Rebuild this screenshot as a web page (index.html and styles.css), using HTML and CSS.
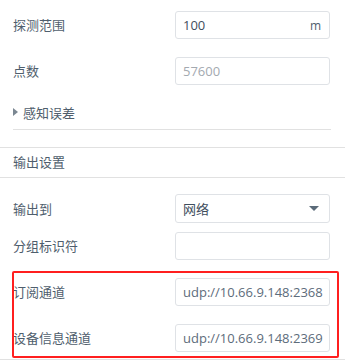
FILE: index.html
```html
<!DOCTYPE html>
<html lang="zh-CN">
<head>
  <meta charset="UTF-8">
  <meta name="viewport" content="width=device-width, initial-scale=1.0">
  <title>输出设置</title>
  <link rel="stylesheet" href="styles.css">
</head>
<body>
  <div class="panel">
    <div class="form top-form">
      <div class="row">
        <label>探测范围</label>
        <div class="field">
          <span class="value">100</span>
          <span class="unit">m</span>
        </div>
      </div>
      <div class="row">
        <label>点数</label>
        <div class="field">
          <span class="value muted">57600</span>
        </div>
      </div>
      <div class="collapse">
        <span class="caret"></span>
        <span>感知误差</span>
      </div>
    </div>

    <div class="section-title">输出设置</div>

    <div class="form">
      <div class="row tight">
        <label>输出到</label>
        <div class="field select">
          <span class="value">网络</span>
          <span class="arrow"></span>
        </div>
      </div>
      <div class="row">
        <label>分组标识符</label>
        <div class="field"></div>
      </div>
      <div class="highlight">
        <div class="row">
          <label>订阅通道</label>
          <div class="field">
            <span class="value soft">udp://10.66.9.148:2368</span>
          </div>
        </div>
        <div class="row last">
          <label>设备信息通道</label>
          <div class="field">
            <span class="value soft">udp://10.66.9.148:2369</span>
          </div>
        </div>
      </div>
    </div>
    <div class="panel-end"></div>
  </div>
</body>
</html>
```

FILE: styles.css
```css
* {
  margin: 0;
  padding: 0;
  box-sizing: border-box;
}

body {
  background: #ffffff;
  font-family: 'Open Sans', 'Noto Sans CJK SC', sans-serif;
  font-size: 13px;
  color: #4f5e6d;
}

.panel {
  width: 345px;
}

.form {
  padding: 16px 15px 0 13px;
}

.top-form {
  padding-top: 11px;
}

.row {
  display: flex;
  align-items: center;
  margin-bottom: 18px;
}

.row.tight {
  margin-bottom: 9px;
}

.row.last {
  margin-bottom: 0;
}

.row label {
  flex: 1;
  line-height: 20px;
}

.field {
  width: 155px;
  height: 28px;
  border: 1px solid #dfe2e6;
  border-radius: 3px;
  display: flex;
  align-items: center;
  justify-content: space-between;
  padding: 0 8px 0 7px;
  color: #3f4e5d;
  white-space: nowrap;
  overflow: hidden;
}

.value.muted {
  color: #a3a9b0;
}

.value.soft {
  color: #5d6c7b;
}

.unit {
  font-size: 12px;
  color: #4f5e6d;
}

.select {
  height: 29px;
}

.arrow {
  width: 0;
  height: 0;
  border-left: 5px solid transparent;
  border-right: 5px solid transparent;
  border-top: 5px solid #5b6b79;
  margin-right: 2px;
}

.collapse {
  display: flex;
  align-items: center;
  gap: 4px;
  margin-top: -1px;
  height: 20px;
  box-sizing: content-box;
  padding-bottom: 7px;
  border-bottom: 1px solid #e1e1e1;
  margin-right: -1px;
}

.caret {
  width: 0;
  height: 0;
  border-top: 4px solid transparent;
  border-bottom: 4px solid transparent;
  border-left: 5px solid #7b8792;
  margin-right: 1px;
}

.section-title {
  margin-top: 17px;
  height: 31px;
  line-height: 29px;
  padding-left: 13px;
  border-top: 1px solid #e1e1e1;
  border-bottom: 1px solid #e1e1e1;
}

.highlight {
  position: relative;
}

.highlight::after {
  content: '';
  position: absolute;
  top: -7px;
  bottom: -6px;
  left: -1px;
  right: -9px;
  border: 2px solid #ff1f1f;
  border-radius: 2px;
  pointer-events: none;
}

.panel-end {
  margin-top: 7px;
  border-top: 1px solid #e1e1e1;
}
```
